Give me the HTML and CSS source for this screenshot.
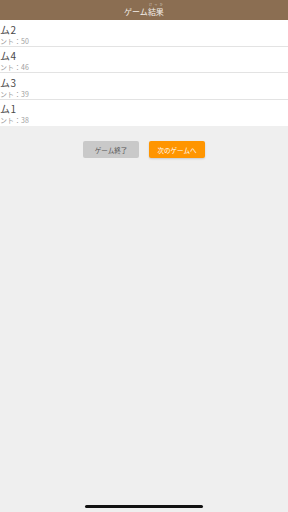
FILE: index.html
```html
<!DOCTYPE html>
<html lang="ja">
<head>
  <meta charset="UTF-8" />
  <title>ゲーム結果</title>
  <meta name="viewport" content="width=device-width, initial-scale=1.0" />
  <link rel="stylesheet" href="styles.css">
</head>
<body>

  <!-- Header -->
  <header class="nav-bar">
    <h1>ゲーム<ruby>結果<rt>けっか</rt></ruby></h1>
  </header>

  <!-- Results -->
  <ul class="results">
    <li class="result-row">
      <div class="team">チーム2</div>
      <div class="points">ポイント：50</div>
    </li>
    <li class="result-row">
      <div class="team">チーム4</div>
      <div class="points">ポイント：46</div>
    </li>
    <li class="result-row">
      <div class="team">チーム3</div>
      <div class="points">ポイント：39</div>
    </li>
    <li class="result-row">
      <div class="team">チーム1</div>
      <div class="points">ポイント：38</div>
    </li>
  </ul>

  <div class="actions">
    <button class="btn btn-end">ゲーム終了</button>
    <button class="btn btn-next">次のゲームへ</button>
  </div>

  <div class="home-indicator"></div>

</body>
</html>
```

FILE: styles.css
```css
:root {
  --brown: #8b6e52;
  --bg: #efefef;
  --orange: #ff9500;
  --grey-btn: #c9c9c9;
}

* {
  box-sizing: border-box;
}

body {
  margin: 0;
  height: 512px;
  background: var(--bg);
  font-family: "Noto Sans CJK JP", "Noto Sans", sans-serif;
  display: flex;
  flex-direction: column;
  overflow: hidden;
}

.nav-bar {
  height: 20px;
  background: var(--brown);
  display: flex;
  justify-content: center;
  align-items: flex-end;
}

.nav-bar h1 {
  margin: 0 0 3px;
  color: #f4efe9;
  font-size: 8px;
  font-weight: normal;
  line-height: 10px;
}

.nav-bar rt {
  font-size: 3px;
  line-height: 3px;
  color: #d9cfc4;
}

.results {
  list-style: none;
  margin: 0;
  padding: 0;
  background: #fff;
}

.result-row {
  height: 26.5px;
  padding: 3.5px 0 0;
  border-bottom: 1px solid #e3e3e3;
  margin-left: -21px;
}

.result-row:last-child {
  border-bottom: none;
}

.team {
  font-size: 10px;
  line-height: 12px;
  letter-spacing: 0.6px;
  color: #4a4a4a;
}

.points {
  margin-top: 1px;
  padding-left: 7px;
  font-size: 7px;
  line-height: 8px;
  color: #a0a0a0;
}

.actions {
  display: flex;
  justify-content: center;
  gap: 10px;
  margin-top: 15px;
}

.btn {
  width: 56px;
  height: 17px;
  border: none;
  border-radius: 2px;
  padding: 0;
  font-family: inherit;
  font-size: 6.5px;
  cursor: pointer;
}

.btn-end {
  background: var(--grey-btn);
  color: #555;
}

.btn-next {
  background: var(--orange);
  color: #fff;
  box-shadow: 0 1px 2px rgba(0,0,0,0.15);
}

.home-indicator {
  width: 118px;
  height: 3px;
  border-radius: 2px;
  background: #111;
  margin: auto auto 4px;
}
```
